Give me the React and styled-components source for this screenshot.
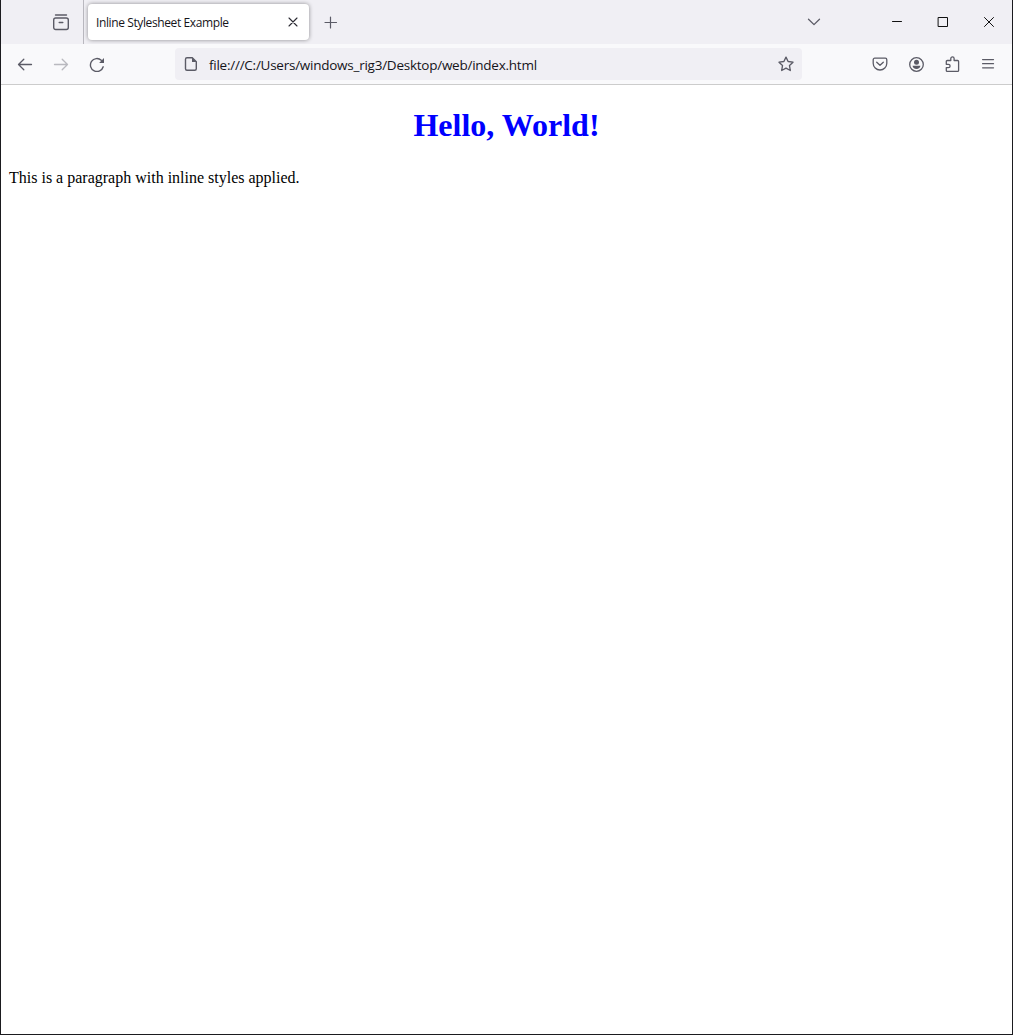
import React from "react";
import styled, { createGlobalStyle } from "styled-components";

const Global = createGlobalStyle`
  * { box-sizing: border-box; }
  html, body { margin: 0; padding: 0; background: #fff; }
  button { font: inherit; color: inherit; background: none; border: 0; padding: 0; margin: 0; }
`;

const Window = styled.div`
  display: flex;
  flex-direction: column;
  height: 1035px;
  width: 1013px;
  border: solid #1b1b1f;
  border-width: 0 1px 1px;
  background: #fff;
  overflow: hidden;
`;

const TabStrip = styled.header`
  display: flex;
  align-items: center;
  height: 44px;
  flex: none;
  background: #f0eff4;
  color: #5b5b66;
  font-family: "Open Sans", "Noto Sans", sans-serif;
`;

const IconButton = styled.button`
  display: flex;
  align-items: center;
  justify-content: center;
  flex: none;
  width: ${(p) => p.$width || 36}px;
  height: ${(p) => p.$height || 32}px;
  color: ${(p) => p.$color || "#5b5b66"};
  opacity: ${(p) => (p.$dim ? 0.4 : 1)};
`;

const ViewArea = styled.div`
  display: flex;
  align-items: center;
  width: 83px;
  height: 44px;
  padding-left: 42px;
  border-right: 1px solid #b9b8bf;
`;

const Tab = styled.div`
  display: flex;
  align-items: center;
  justify-content: space-between;
  width: 221px;
  height: 36px;
  margin-left: 4px;
  padding: 0 4px 0 8px;
  background: #fff;
  border-radius: 4px;
  box-shadow: 0 0 4px rgba(0, 0, 0, 0.42);
  color: #15141a;
`;

const TabTitle = styled.span`
  padding-top: 2px;
  font-size: 12px;
  line-height: 18px;
  letter-spacing: ${(p) => p.$spacing}px;
  white-space: nowrap;
`;

const Spacer = styled.div`
  flex: 1;
`;

const WindowControls = styled.div`
  display: flex;
  margin-left: 42px;
`;

const Toolbar = styled.nav`
  display: flex;
  align-items: center;
  flex: none;
  height: 41px;
  padding: 0 6px;
  background: #f9f9fb;
  border-bottom: 1px solid #cccccc;
`;

const AddressBar = styled.div`
  display: flex;
  align-items: center;
  width: 627px;
  height: 32px;
  margin-left: 60px;
  padding-left: 8px;
  background: #f0eff4;
  border-radius: 4px;
  color: #5b5b66;
  font-family: "Open Sans", "Noto Sans", sans-serif;
`;

const Address = styled.span`
  flex: 1;
  margin-left: 10px;
  padding-top: 2px;
  color: #15141a;
  font-size: 13.5px;
  line-height: 20px;
  letter-spacing: ${(p) => p.$spacing}px;
  white-space: nowrap;
`;

const Page = styled.main`
  flex: 1;
  padding: 0 8px;
  font-family: "Liberation Serif", "Times New Roman", serif;
  font-size: 16px;
  color: #000;
`;

const Heading = styled.h1`
  margin: 22px 0 25px;
  font-size: 32px;
  line-height: 37px;
  text-align: center;
  color: #00f;
`;

const Paragraph = styled.p`
  margin: 0;
  line-height: 18px;
`;

const Svg = styled.svg`
  display: block;
  flex: none;
  fill: none;
  stroke: currentColor;
  stroke-width: ${(p) => p.$stroke || 1.25};
  stroke-linecap: round;
  stroke-linejoin: ${(p) => p.$join || "round"};
`;

function Icon({ size = 16, stroke, join, children }) {
  return (
    <Svg width={size} height={size} viewBox={`0 0 ${size} ${size}`} $stroke={stroke} $join={join} aria-hidden="true">
      {children}
    </Svg>
  );
}

export default function App() {
  return (
    <>
      <Global />
      <Window>
        <TabStrip>
          <ViewArea>
            <IconButton aria-label="View">
              <Icon size={18} stroke={1.4}>
                <path d="M3.500 2h11" />
                <rect x="1.700" y="5" width="14.600" height="11.500" rx="2" />
                <path d="M7.200 9.500h3.600" />
              </Icon>
            </IconButton>
          </ViewArea>
          <Tab>
            <TabTitle $spacing={-0.39}>Inline Stylesheet Example</TabTitle>
            <IconButton $width={24} $height={24} $color="#2b2a33" aria-label="Close tab">
              <Icon stroke={1.1}>
                <path d="M4 4l8 8M12 4l-8 8" />
              </Icon>
            </IconButton>
          </Tab>
          <IconButton $width={44} aria-label="New tab">
            <Icon stroke={1.2}>
              <path d="M7.500 3v11M2 8.500h11.500" />
            </Icon>
          </IconButton>
          <Spacer />
          <IconButton aria-label="List tabs">
            <Icon stroke={1.3}>
              <path d="M2.500 5.300L8 10.600l5.500-5.300" />
            </Icon>
          </IconButton>
          <WindowControls>
            <IconButton $width={46} $height={44} $color="#111" aria-label="Minimize">
              <Icon stroke={1}>
                <path d="M3.500 7.500h9" />
              </Icon>
            </IconButton>
            <IconButton $width={46} $height={44} $color="#111" aria-label="Maximize">
              <Icon stroke={1} join="miter">
                <path d="M3.500 3.500h9v9h-9z" />
              </Icon>
            </IconButton>
            <IconButton $width={46} $height={44} $color="#111" aria-label="Close">
              <Icon stroke={1}>
                <path d="M3.500 3.500l9 9M12.500 3.500l-9 9" />
              </Icon>
            </IconButton>
          </WindowControls>
        </TabStrip>

        <Toolbar>
          <IconButton aria-label="Back">
            <Icon stroke={1.3}>
              <path d="M14.500 8.500h-13M6.800 3.200L1.500 8.500l5.300 5.300" />
            </Icon>
          </IconButton>
          <IconButton $dim aria-label="Forward">
            <Icon stroke={1.3}>
              <path d="M1.500 8.500h13M9.200 3.200l5.300 5.300-5.300 5.300" />
            </Icon>
          </IconButton>
          <IconButton aria-label="Reload">
            <Icon stroke={1.4}>
              <path d="M14.200 10.800A6.500 6.500 0 1 1 12.300 4.200" />
              <path d="M15 2v4.900h-4.900z" fill="currentColor" stroke="none" />
            </Icon>
          </IconButton>
          <AddressBar>
            <Icon stroke={1.4}>
              <path d="M4 1.700h5.300l4 4v7.100a1.500 1.500 0 0 1-1.500 1.500H4a1.500 1.500 0 0 1-1.500-1.500V3.200A1.500 1.500 0 0 1 4 1.700z" />
              <path d="M9 1.500v4.600h4.500z" fill="currentColor" stroke="none" />
            </Icon>
            <Address $spacing={-0.25}>file:///C:/Users/windows_rig3/Desktop/web/index.html</Address>
            <IconButton $width={32} aria-label="Bookmark">
              <Icon stroke={1.35}>
                <path d="M8 1.100l2.100 4.400 4.900.7-3.500 3.400.8 4.900L8 12.200l-4.300 2.300.8-4.900L1 6.200l4.900-.7z" />
              </Icon>
            </IconButton>
          </AddressBar>
          <Spacer />
          <IconButton aria-label="Pocket">
            <Icon stroke={1.3}>
              <path d="M2.700 2.200h10.600a1.500 1.500 0 0 1 1.500 1.500v3.500a6.800 6.800 0 0 1-13.600 0V3.700a1.500 1.500 0 0 1 1.500-1.500z" />
              <path d="M4.700 6.200L8 9.300l3.300-3.100" />
            </Icon>
          </IconButton>
          <IconButton aria-label="Account">
            <Icon stroke={1.3}>
              <circle cx="8.500" cy="8.500" r="6.800" />
              <circle cx="8.500" cy="6.300" r="2.500" fill="currentColor" stroke="none" />
              <path d="M4.600 9.700h7.800c0 1.900-1.700 3.200-3.900 3.200s-3.900-1.300-3.900-3.200z" fill="currentColor" stroke="none" />
            </Icon>
          </IconButton>
          <IconButton aria-label="Extensions">
            <Icon stroke={1.3}>
              <path d="M3.300 4.500h3.500V2.600a1.650 1.650 0 0 1 3.300 0v1.900h3.500a1 1 0 0 1 1 1v8.900a1 1 0 0 1-1 1H3.300a1 1 0 0 1-1-1v-2.700h2.100a1.700 1.700 0 0 0 0-3.400H2.300V5.500a1 1 0 0 1 1-1z" />
            </Icon>
          </IconButton>
          <IconButton aria-label="Menu">
            <Icon stroke={1.3}>
              <path d="M2.600 3.600h10.900M2.600 7.700h10.900M2.600 11.800h10.900" />
            </Icon>
          </IconButton>
        </Toolbar>

        <Page>
          <Heading>Hello, World!</Heading>
          <Paragraph>This is a paragraph with inline styles applied.</Paragraph>
        </Page>
      </Window>
    </>
  );
}
